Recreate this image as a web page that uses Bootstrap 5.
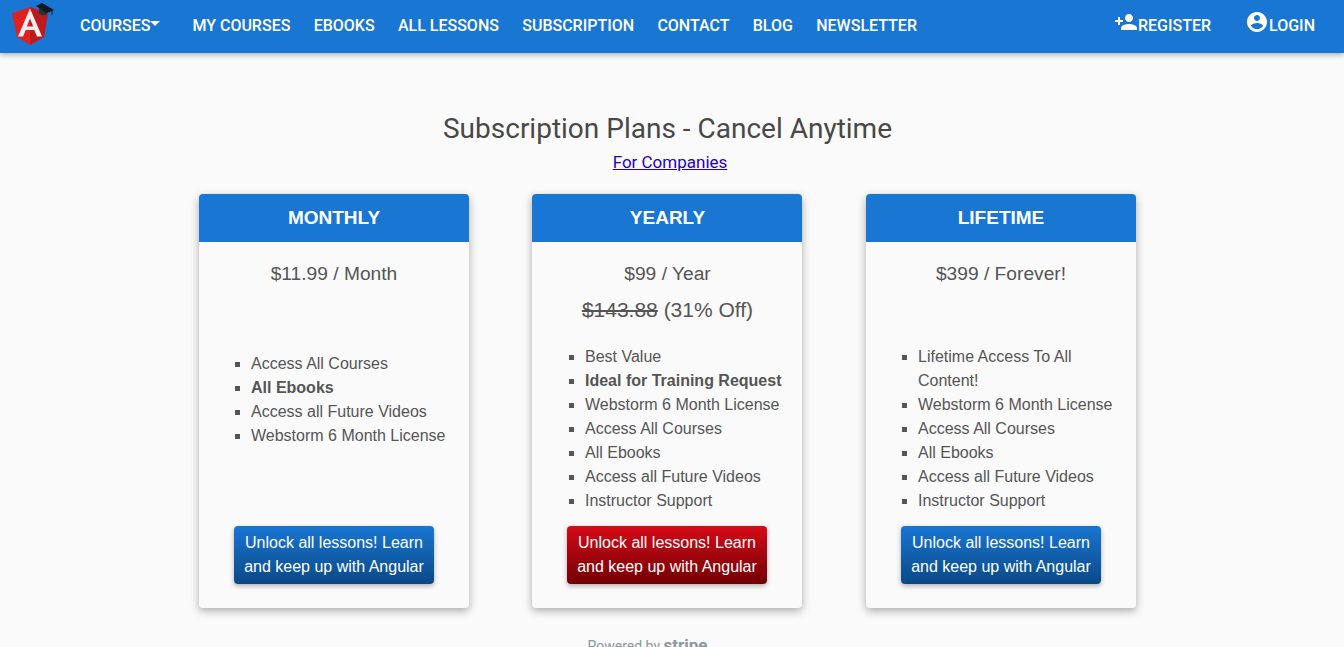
<!DOCTYPE html>
<html lang="en">
<head>
<meta charset="utf-8">
<title>Subscription Plans</title>
<link href="https://cdn.jsdelivr.net/npm/bootstrap@5.3.0/dist/css/bootstrap.min.css" rel="stylesheet">
<style>
html,body{height:100%;overflow:hidden}
body{background:#fafafa;font-family:"Liberation Sans",Arial,sans-serif;color:#555}
.topbar{background:#1976d2;height:53px;padding:0 29px 2px 12px;box-shadow:0 2px 5px rgba(0,0,0,.3);font-family:Roboto,sans-serif;position:relative;z-index:2}
.logo-box{width:44px;height:46px;margin-right:24px;margin-top:1px}
.toplink{color:#fff;text-decoration:none;text-transform:uppercase;font-size:16px;font-weight:500;line-height:24px;white-space:nowrap}
.caret-mark{display:inline-block;border-left:5px solid transparent;border-right:5px solid transparent;border-top:5px solid #fff;vertical-align:5px}
.toplinks{gap:23.3px}
.course-link{margin-right:8.7px}
.acct{gap:34px}
.acct svg{fill:#fff;vertical-align:3px;margin:-6px 0}
.page-main{padding:59px 9px 0 0}
.page-title{font-family:Roboto,sans-serif;font-size:28px;font-weight:400;line-height:34px;color:#484848;margin:0 0 4px}
.corp-link{font-family:Roboto,sans-serif;font-size:17px;line-height:24px;color:#2200cc;margin-left:5px}
.plan-row{gap:63px;margin-top:19px}
.plan{width:270px;height:414px;background:#fafafa;border-radius:4px;box-shadow:0 3px 8px rgba(0,0,0,.32);overflow:hidden}
.plan-mid{margin-right:1px}
.plan-head{background:#1976d2;color:#fff;height:48px;font-size:19px;font-weight:700;line-height:48px;margin:0}
.plan-body{padding:20px 0 24px}
.plan-mid .plan-head,.plan-mid .plan-body{padding-left:1px}
.plan-mid .unlock{margin-left:-1px}
.price{font-size:19.2px;line-height:24px;height:24px;margin:0 0 12px}
.was{font-size:21px;line-height:24px;height:24px;margin:0 0 23px}
.perks{list-style:square;margin:0;padding:0 10px 0 52px;font-size:16px;line-height:24px}
.perks-short{margin-top:7px}
.unlock{display:block;width:200px;height:58px;margin-top:auto;padding:5px 10px;background:linear-gradient(#1976d2,#0a4987);color:#fff;border:0;border-radius:4px;font-size:16px;line-height:24px;box-shadow:0 2px 5px rgba(0,0,0,.3)}
.unlock-red{background:linear-gradient(#d60b18,#720003)}
.unlock:hover{color:#fff}
.powered{margin:27px 0 0 -40px;color:#8d979f;font-family:Roboto,sans-serif;font-size:14px;line-height:20px}
.powered b{font-size:17px;color:#8d979f}
</style>
</head>
<body>
<nav class="topbar d-flex align-items-center">
  <svg class="logo-box flex-shrink-0" viewBox="0 0 44 46" aria-label="Angular logo">
    <polygon points="18,4 0,10.5 5,34 18,42 32,34 36,10.5" fill="#df2220"/>
    <polygon points="18,4 18,42 32,34 36,10.5" fill="#bd1a1f"/>
    <path d="M18 5.5L6 33.5h5l2.7-6.5h8.6l2.7 6.5h5L18 5.5zm0 10l3.2 8h-6.4z" fill="#f3eeee"/>
    <path d="M27 5v5c2 3 6 3 8 1V7z" fill="#2b3036"/>
    <polygon points="30,0 42,7 35,10 24,3" fill="#15181c"/>
    <rect x="39.5" y="7" width="1" height="5" fill="#15181c"/>
  </svg>
  <div class="toplinks d-flex align-items-center flex-grow-1">
    <a class="toplink course-link" href="#">Courses<span class="caret-mark"></span></a>
    <a class="toplink" href="#">My Courses</a>
    <a class="toplink" href="#">Ebooks</a>
    <a class="toplink" href="#">All Lessons</a>
    <a class="toplink" href="#">Subscription</a>
    <a class="toplink" href="#">Contact</a>
    <a class="toplink" href="#">Blog</a>
    <a class="toplink" href="#">Newsletter</a>
  </div>
  <div class="acct d-flex align-items-center">
    <a class="toplink" href="#"><svg width="24" height="24" viewBox="0 0 24 24"><path d="M15 12c2.21 0 4-1.79 4-4s-1.79-4-4-4-4 1.79-4 4 1.79 4 4 4zm-9-2V7H4v3H1v2h3v3h2v-3h3v-2H6zm9 4c-2.67 0-8 1.34-8 4v2h16v-2c0-2.66-5.33-4-8-4z"/></svg>Register</a>
    <a class="toplink" href="#"><svg width="24" height="24" viewBox="0 0 24 24"><path d="M12 2C6.48 2 2 6.48 2 12s4.48 10 10 10 10-4.48 10-10S17.52 2 12 2zm0 3c1.66 0 3 1.34 3 3s-1.34 3-3 3-3-1.34-3-3 1.34-3 3-3zm0 14.2c-2.5 0-4.71-1.28-6-3.22.03-1.99 4-3.08 6-3.08 1.99 0 5.97 1.09 6 3.08-1.29 1.94-3.5 3.22-6 3.22z"/></svg>Login</a>
  </div>
</nav>
<main class="page-main text-center">
  <h2 class="page-title">Subscription Plans - Cancel Anytime</h2>
  <a class="corp-link" href="#">For Companies</a>
  <div class="plan-row d-flex justify-content-center text-start">
    <section class="plan d-flex flex-column">
      <h3 class="plan-head text-center">MONTHLY</h3>
      <div class="plan-body d-flex flex-column align-items-center flex-grow-1">
        <p class="price text-center">$11.99 / Month</p>
        <div class="was"></div>
        <ul class="perks perks-short w-100">
          <li>Access All Courses</li>
          <li><b>All Ebooks</b></li>
          <li>Access all Future Videos</li>
          <li>Webstorm 6 Month License</li>
        </ul>
        <a class="unlock text-center text-decoration-none" href="#">Unlock all lessons! Learn and keep up with Angular</a>
      </div>
    </section>
    <section class="plan plan-mid d-flex flex-column">
      <h3 class="plan-head text-center">YEARLY</h3>
      <div class="plan-body d-flex flex-column align-items-center flex-grow-1">
        <p class="price text-center">$99 / Year</p>
        <div class="was text-center"><s>$143.88</s> (31% Off)</div>
        <ul class="perks w-100">
          <li>Best Value</li>
          <li><b>Ideal for Training Request</b></li>
          <li>Webstorm 6 Month License</li>
          <li>Access All Courses</li>
          <li>All Ebooks</li>
          <li>Access all Future Videos</li>
          <li>Instructor Support</li>
        </ul>
        <a class="unlock unlock-red text-center text-decoration-none" href="#">Unlock all lessons! Learn and keep up with Angular</a>
      </div>
    </section>
    <section class="plan d-flex flex-column">
      <h3 class="plan-head text-center">LIFETIME</h3>
      <div class="plan-body d-flex flex-column align-items-center flex-grow-1">
        <p class="price text-center">$399 / Forever!</p>
        <div class="was"></div>
        <ul class="perks w-100">
          <li>Lifetime Access To All Content!</li>
          <li>Webstorm 6 Month License</li>
          <li>Access All Courses</li>
          <li>All Ebooks</li>
          <li>Access all Future Videos</li>
          <li>Instructor Support</li>
        </ul>
        <a class="unlock text-center text-decoration-none" href="#">Unlock all lessons! Learn and keep up with Angular</a>
      </div>
    </section>
  </div>
  <div class="powered">Powered by <b>stripe</b></div>
</main>
<script src="https://cdn.jsdelivr.net/npm/bootstrap@5.3.0/dist/js/bootstrap.bundle.min.js"></script>
</body>
</html>
